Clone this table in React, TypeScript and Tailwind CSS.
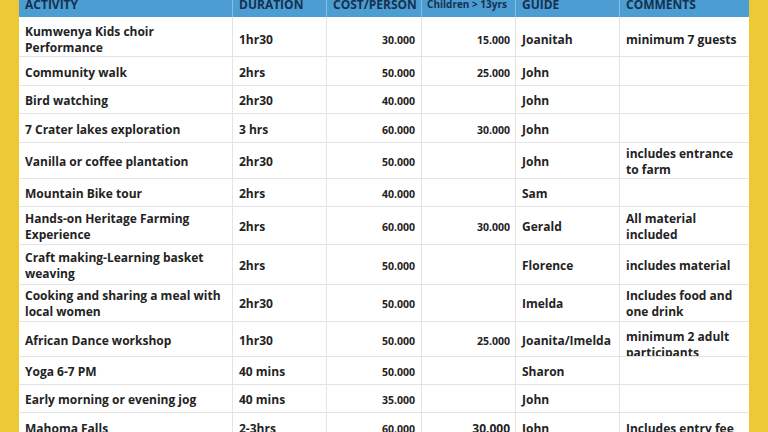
const cols = "grid grid-cols-[214px_94px_95px_94px_104px_129px]";

type Row = {
  activity: string;
  duration: string;
  cost: string;
  kids?: string;
  guide: string;
  comment?: string;
  h: string;
  pad: string;
};

const rows: Row[] = [
  { activity: "Kumwenya Kids choir Performance", duration: "1hr30", cost: "30.000", kids: "15.000", guide: "Joanitah", comment: "minimum 7 guests", h: "h-[40px]", pad: "pt-[6px]" },
  { activity: "Community walk", duration: "2hrs", cost: "50.000", kids: "25.000", guide: "John", h: "h-[29px]", pad: "pt-[3px]" },
  { activity: "Bird watching", duration: "2hr30", cost: "40.000", guide: "John", h: "h-[28px]", pad: "pt-[3px]" },
  { activity: "7 Crater lakes exploration", duration: "3 hrs", cost: "60.000", kids: "30.000", guide: "John", h: "h-[29px]", pad: "pt-[3px]" },
  { activity: "Vanilla or coffee plantation", duration: "2hr30", cost: "50.000", guide: "John", comment: "includes entrance to farm", h: "h-[36px]", pad: "pt-[2px]" },
  { activity: "Mountain Bike tour", duration: "2hrs", cost: "40.000", guide: "Sam", h: "h-[28px]", pad: "pt-[3px]" },
  { activity: "Hands-on Heritage Farming Experience", duration: "2hrs", cost: "60.000", kids: "30.000", guide: "Gerald", comment: "All material included", h: "h-[38px]", pad: "pt-[3px]" },
  { activity: "Craft making-Learning basket weaving", duration: "2hrs", cost: "50.000", guide: "Florence", comment: "includes material", h: "h-[40px]", pad: "pt-[3px]" },
  { activity: "Cooking and sharing a meal with local women", duration: "2hr30", cost: "50.000", guide: "Imelda", comment: "Includes food and one drink", h: "h-[37px]", pad: "pt-[2px]" },
  { activity: "African Dance workshop", duration: "1hr30", cost: "50.000", kids: "25.000", guide: "Joanita/Imelda", comment: "minimum 2 adult participants", h: "h-[35px]", pad: "pt-[3px]" },
  { activity: "Yoga 6-7 PM", duration: "40 mins", cost: "50.000", guide: "Sharon", h: "h-[28px]", pad: "pt-[2px]" },
  { activity: "Early morning or evening jog", duration: "40 mins", cost: "35.000", guide: "John", h: "h-[28px]", pad: "pt-[2px]" },
  { activity: "Mahoma Falls", duration: "2-3hrs", cost: "60.000", kids: "30.000", guide: "John", comment: "Includes entry fee", h: "h-[32px]", pad: "pt-0" },
];

const headers = ["ACTIVITY", "DURATION", "COST/PERSON", "Children > 13yrs", "GUIDE", "COMMENTS"];

export default function App() {
  return (
    <div
      className="h-[432px] w-[768px] overflow-hidden bg-[#ecc935] pl-[19px] text-[#232323]"
      style={{ fontFamily: '"Open Sans", "Noto Sans", sans-serif' }}
    >
      <div className="-mt-[8px] w-[730px] bg-white">
        {/* header */}
        <div className={`${cols} h-[25px] bg-[#4b9dd2] text-[12px] font-bold text-[#17304f]`}>
          {headers.map((h, i) => (
            <div
              key={h}
              className={`flex items-center whitespace-nowrap border-r border-[#86bee4] px-[6px] ${
                i === 3 ? "justify-end pr-[8px] text-[10px]" : ""
              } ${i === 5 ? "border-r-0" : ""}`}
            >
              {h}
            </div>
          ))}
        </div>

        {rows.map((r, idx) => {
          const cell = `flex border-r border-[#e4e4e4] ${r.pad}`;
          return (
            <div
              key={r.activity}
              className={`${cols} ${r.h} border-b border-[#e4e4e4] text-[12px] font-bold leading-[16px]`}
            >
              <div className={`${cell} items-center px-[6px]`}>{r.activity}</div>
              <div className={`${cell} items-center px-[6px]`}>{r.duration}</div>
              <div className={`${cell} items-center justify-end px-[6px] text-[10.5px]`}>{r.cost}</div>
              <div
                className={`${cell} items-center justify-end pr-[5px] ${
                  idx === rows.length - 1 ? "text-[12px]" : "text-[10.5px]"
                }`}
              >
                {r.kids}
              </div>
              <div className={`${cell} items-center px-[6px]`}>{r.guide}</div>
              <div
                className={`flex overflow-hidden px-[6px] ${
                  idx === 9 ? "items-start pt-[7px]" : `items-center ${r.pad}`
                }`}
              >
                {r.comment}
              </div>
            </div>
          );
        })}
      </div>
    </div>
  );
}
